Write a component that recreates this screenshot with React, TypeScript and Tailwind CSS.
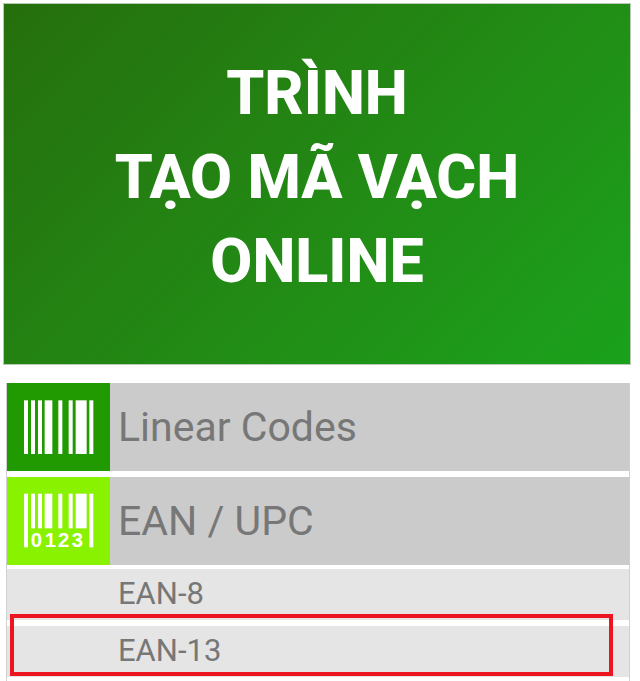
type Bar = { x: number; w: number };

const bars: Bar[] = [
  { x: 51, w: 12 },
  { x: 72, w: 12 },
  { x: 93, w: 12 },
  { x: 113, w: 23 },
  { x: 154, w: 12 },
  { x: 185, w: 12 },
  { x: 206, w: 33 },
  { x: 247, w: 12 },
];

const digits = [
  { value: "0", x: 88 },
  { value: "1", x: 130 },
  { value: "2", x: 170 },
  { value: "3", x: 211 },
];

const LinearIcon = () => (
  <svg viewBox="0 0 309 264" className="w-full h-full" fill="#fff" aria-hidden="true">
    {bars.map((bar) => (
      <rect key={bar.x} x={bar.x} y="52" width={bar.w} height="161" />
    ))}
  </svg>
);

const EanIcon = () => (
  <svg viewBox="0 0 309 264" className="w-full h-full" fill="#fff" aria-hidden="true">
    {bars.map((bar, i) => (
      <rect
        key={bar.x}
        x={bar.x}
        y="50"
        width={bar.w}
        height={i === 0 || i === bars.length - 1 ? 161 : 104}
      />
    ))}
    {digits.map((digit) => (
      <text
        key={digit.value}
        x={digit.x}
        y="210"
        textAnchor="middle"
        fontSize="61"
        className="font-['Liberation_Sans',sans-serif] font-bold"
      >
        {digit.value}
      </text>
    ))}
  </svg>
);

const categories = [
  { label: "Linear Codes", icon: <LinearIcon />, color: "bg-[#219a02]" },
  { label: "EAN / UPC", icon: <EanIcon />, color: "bg-[#88f200]" },
];

const codes = [
  { label: "EAN-8", marked: false },
  { label: "EAN-13", marked: true },
];

const App = () => {
  return (
    <main className="bg-white pt-[3px] pl-[3px] pr-[9px] font-[Roboto,sans-serif]">
      {/* Banner */}
      <header className="border border-[#b9c9b5] bg-linear-135 from-[#256f0d] to-[#1aa21c] pt-[47px] pb-[61px] text-center">
        <h1 className="text-[61px] leading-[84px] font-extrabold text-white">
          TRÌNH
          <br />
          TẠO MÃ VẠCH
          <br />
          ONLINE
        </h1>
      </header>

      {/* Barcode types */}
      <nav className="mt-[18px] ml-[3px] mr-px border-x border-[#d0d0d0] pb-1 text-[#777]">
        <ul className="flex flex-col gap-[6px]">
          {categories.map((category) => (
            <li key={category.label}>
              <a href="#" className="flex h-[88px] items-center bg-[#cbcbcb]">
                <span className={`h-full w-[103px] shrink-0 ${category.color}`}>
                  {category.icon}
                </span>
                <span className="pl-2 text-[41px] leading-[48px]">{category.label}</span>
              </a>
            </li>
          ))}
        </ul>

        <ul className="mt-1 flex flex-col gap-[6px]">
          {codes.map((code) => (
            <li key={code.label} className="relative">
              <a
                href="#"
                className="flex h-[51px] items-center bg-[#e5e5e5] pb-0.5 pl-[111px] text-[31px] leading-[36px]"
              >
                {code.label}
              </a>
              {code.marked && (
                <span className="pointer-events-none absolute -top-3 right-4 bottom-px left-[3px] border-4 border-[#ed1620]" />
              )}
            </li>
          ))}
        </ul>
      </nav>
    </main>
  );
};

export default App;
